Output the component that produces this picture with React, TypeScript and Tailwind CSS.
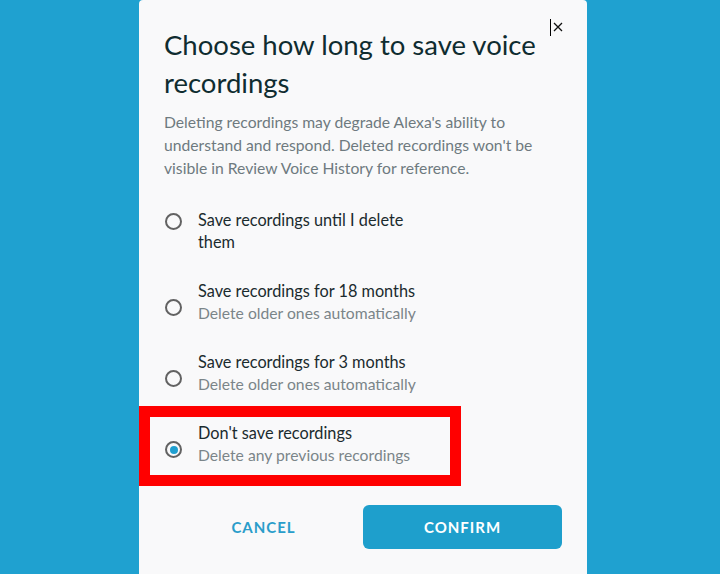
import { useState } from "react";

const options = [
  { id: "forever", label: "Save recordings until I delete them", sub: "", radioTop: "mt-[4px]" },
  { id: "18m", label: "Save recordings for 18 months", sub: "Delete older ones automatically", radioTop: "mt-[19px]" },
  { id: "3m", label: "Save recordings for 3 months", sub: "Delete older ones automatically", radioTop: "mt-[19px]" },
  { id: "none", label: "Don't save recordings", sub: "Delete any previous recordings", radioTop: "mt-[19px]" },
];

export default function App() {
  const [choice, setChoice] = useState("none");

  return (
    <div
      className="h-[574px] w-[720px] overflow-hidden bg-[#1fa1d0]"
      style={{ fontFamily: "Lato, 'Open Sans', sans-serif" }}
    >
      <div className="relative ml-[139px] h-[600px] w-[448px] rounded-[4px] bg-[#f9f9fa] px-[25px] pt-[26px]">
        {/* close */}
        <button className="absolute right-[24px] top-[19px] flex items-start gap-[2px]">
          <span className="block h-[17px] w-[1px] bg-black" />
          <svg width="10" height="10" viewBox="0 0 10 10" className="mt-[3px]">
            <path d="M1 1 L9 9 M9 1 L1 9" stroke="#111" strokeWidth="1.3" />
          </svg>
        </button>

        <h1 className="w-[385px] text-[27.5px] font-normal leading-[38px] text-[#0f2c30]">
          Choose how long to save voice recordings
        </h1>
        <p className="mt-[9px] text-[15.7px] leading-[23px] text-[#6e7a7f]">
          Deleting recordings may degrade Alexa's ability to understand and respond. Deleted recordings won't be visible in Review Voice History for reference.
        </p>

        <div className="mt-[29px] flex flex-col gap-[27px]">
          {options.map((o) => (
            <label key={o.id} className="flex cursor-pointer items-start gap-[16px] pl-px" onClick={() => setChoice(o.id)}>
              <span
                className={`${o.radioTop} flex h-[17px] w-[17px] shrink-0 items-center justify-center rounded-full border-[2.5px] border-[#626262]`}
              >
                {choice === o.id && <span className="h-[8px] w-[8px] rounded-full bg-[#1f9fd0]" />}
              </span>
              <span className="flex w-[228px] flex-col leading-[22px]">
                <span className="text-[16.3px] text-[#1b2b2e]">{o.label}</span>
                {o.sub && <span className="text-[15.7px] text-[#7b8589]">{o.sub}</span>}
              </span>
            </label>
          ))}
        </div>

        <div className="mt-[39px] grid grid-cols-2">
          <button className="h-[44px] text-[15px] font-bold tracking-[1px] text-[#2a9dca]">CANCEL</button>
          <button className="h-[44px] rounded-[6px] bg-[#1e9fcc] text-[15px] font-bold tracking-[1px] text-white">
            CONFIRM
          </button>
        </div>

        {/* annotation box */}
        <div className="pointer-events-none absolute left-0 top-[406px] h-[80px] w-[322px] border-[11px] border-[#ff0000]" />
      </div>
    </div>
  );
}
